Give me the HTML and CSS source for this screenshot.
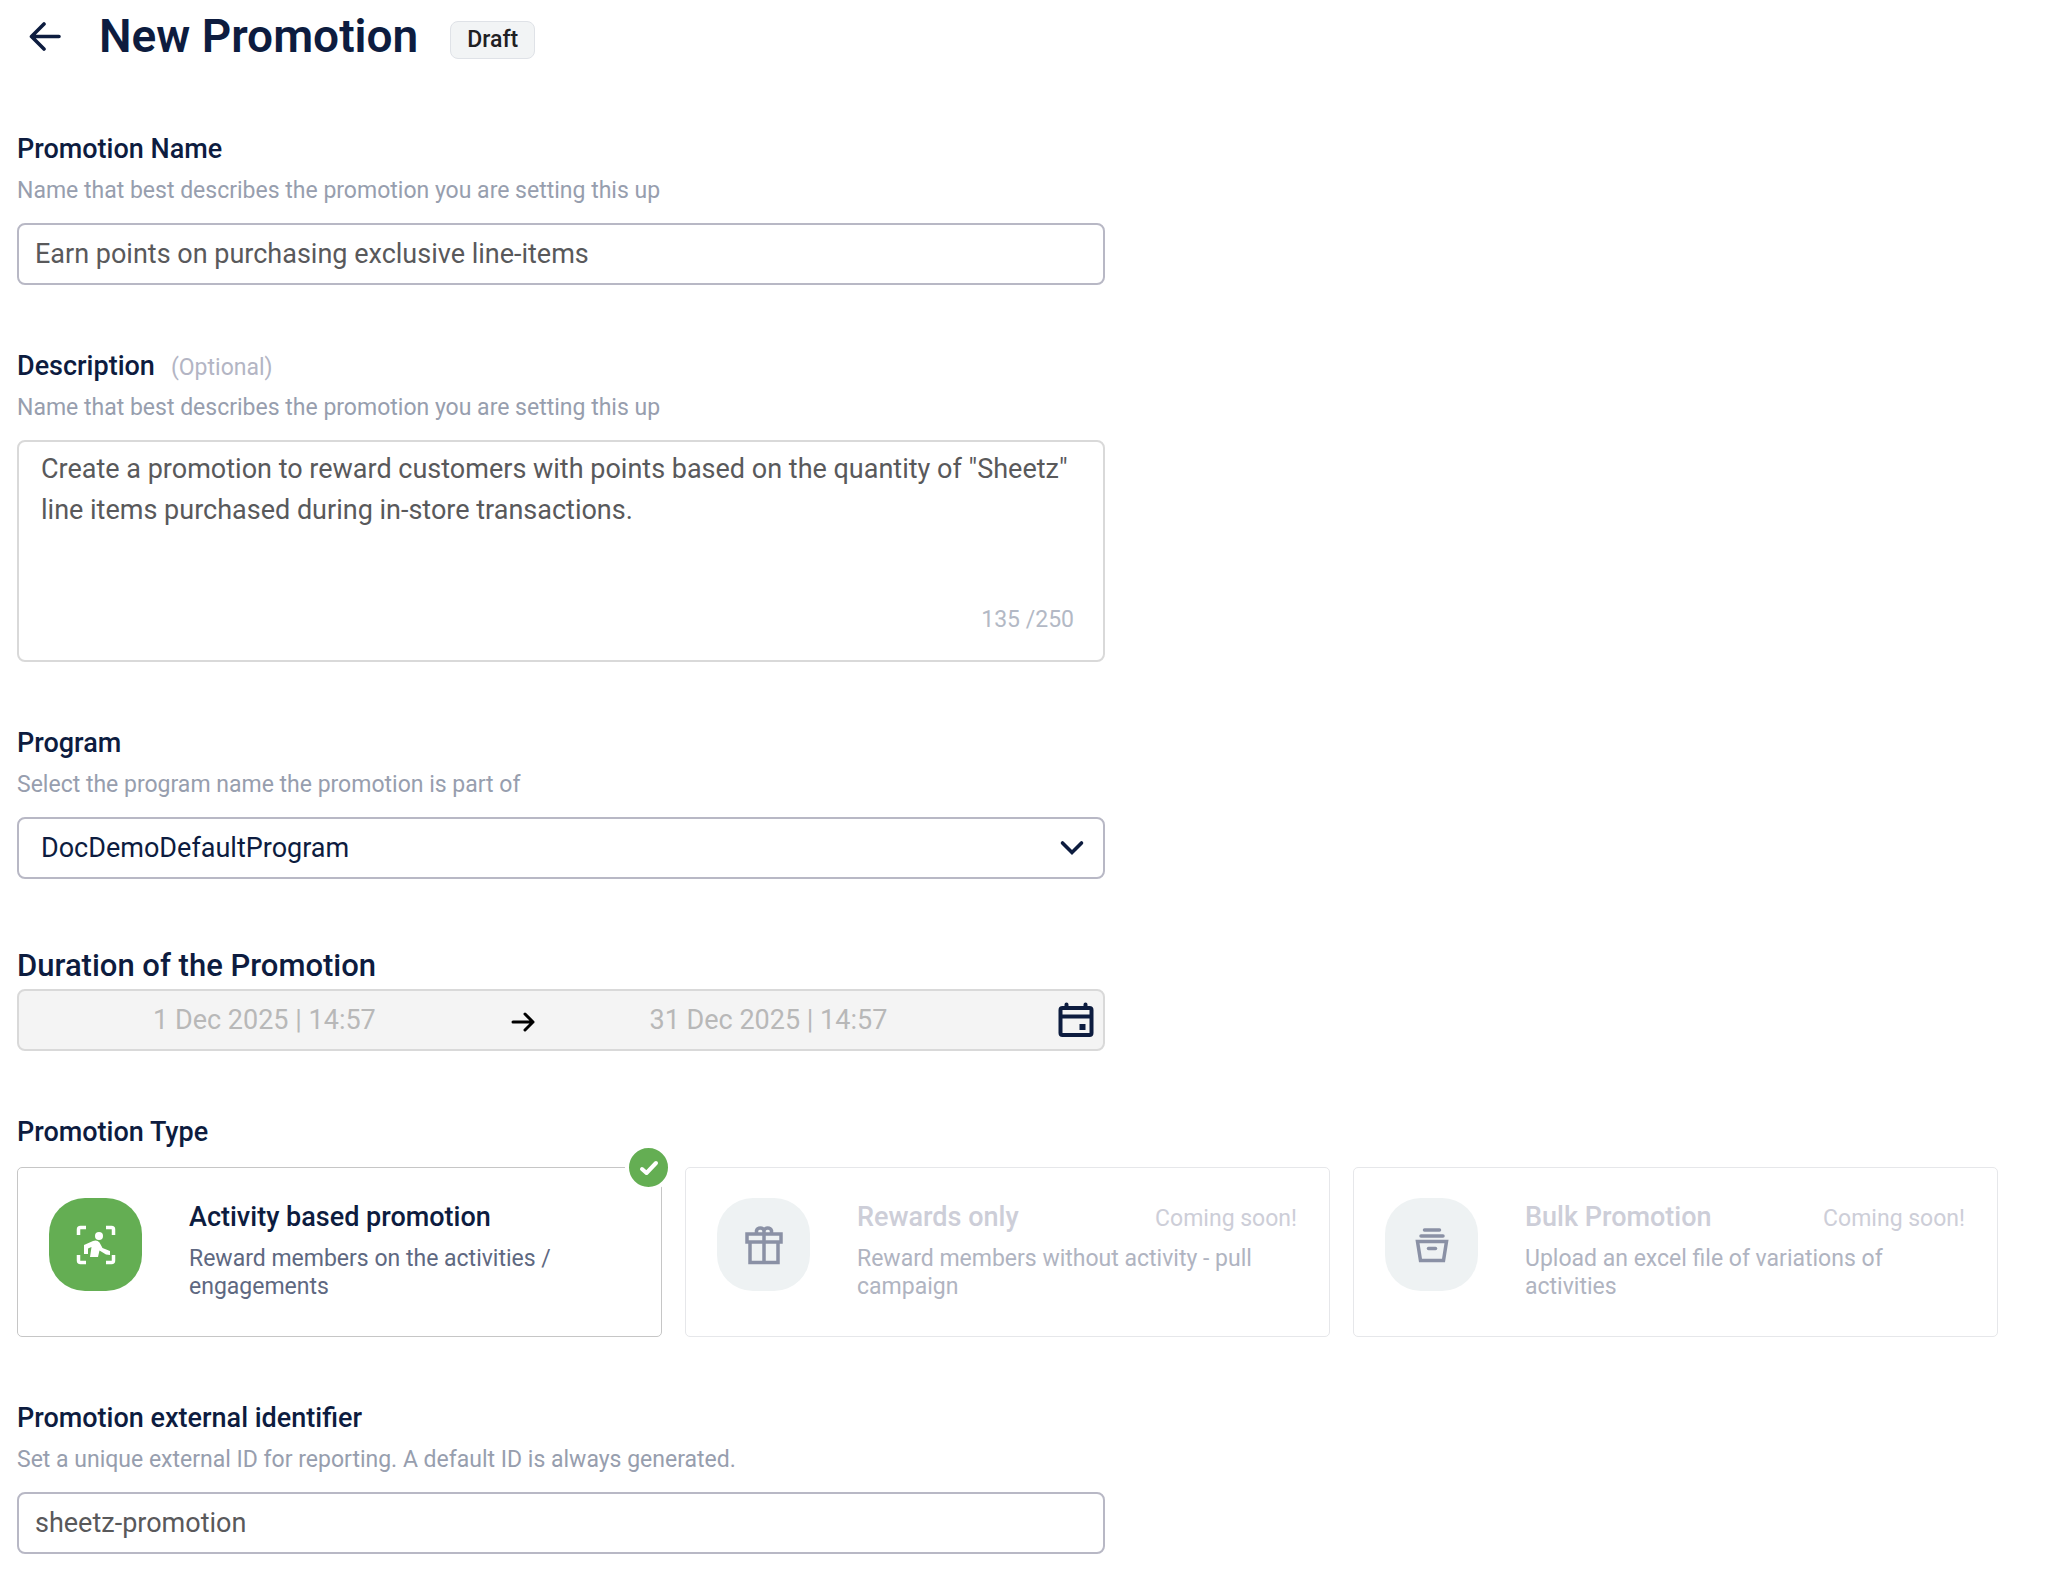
FILE: index.html
```html
<!DOCTYPE html>
<html lang="en">
<head>
<meta charset="utf-8">
<title>New Promotion</title>
<meta name="viewport" content="width=device-width, initial-scale=1">
<link rel="stylesheet" href="styles.css">
</head>
<body>
<main class="page">
  <header class="page-header">
    <button type="button" class="back" aria-label="Back">
      <svg width="32" height="32" viewBox="0 0 32 32" fill="none" stroke="currentColor" stroke-width="3.600" stroke-linecap="round" stroke-linejoin="round"><path d="M30 16.500H3M15 4L2.500 16.500L15 29"/></svg>
    </button>
    <h1 class="title">New Promotion</h1>
    <span class="status">Draft</span>
  </header>

  <form class="form">
    <div class="field">
      <label class="label" for="name">Promotion Name</label>
      <p class="hint">Name that best describes the promotion you are setting this up</p>
      <input class="control" id="name" type="text" value="Earn points on purchasing exclusive line-items">
    </div>

    <div class="field">
      <div class="label-row">
        <label class="label" for="description">Description</label>
        <span class="optional">(Optional)</span>
      </div>
      <p class="hint">Name that best describes the promotion you are setting this up</p>
      <div class="textbox">
        <textarea class="textarea" id="description" maxlength="250">Create a promotion to reward customers with points based on the quantity of "Sheetz" line items purchased during in-store transactions.</textarea>
        <span class="counter">135 /250</span>
      </div>
    </div>

    <div class="field">
      <label class="label" for="program">Program</label>
      <p class="hint">Select the program name the promotion is part of</p>
      <div class="select-wrap">
        <select class="control select" id="program"><option>DocDemoDefaultProgram</option></select>
        <svg class="chevron" width="26" height="26" viewBox="0 0 26 26" fill="none" stroke="currentColor" stroke-width="3.600" stroke-linecap="round" stroke-linejoin="miter"><path d="M3.500 8L13 17.500L22.500 8"/></svg>
      </div>
    </div>

    <div class="field">
      <label class="label label-large" for="start">Duration of the Promotion</label>
      <div class="range">
        <input class="date" id="start" type="text" value="1 Dec 2025 | 14:57" disabled>
        <svg class="range-arrow" width="26" height="26" viewBox="0 0 26 26" fill="none" stroke="currentColor" stroke-width="3" stroke-linecap="round" stroke-linejoin="round"><path d="M3 13H23M15 5L23 13L15 21"/></svg>
        <input class="date" type="text" aria-label="End date" value="31 Dec 2025 | 14:57" disabled>
        <svg class="calendar" width="36" height="36" viewBox="0 0 36 36" fill="none" stroke="currentColor" stroke-width="4"><rect x="2.500" y="6" width="31" height="27" rx="2"/><path d="M2 14.500H34"/><path d="M8.500 6V2.500M27.500 6V2.500" stroke-linecap="round"/><path d="M21.500 22h6v6h-6z" fill="currentColor" stroke="none"/></svg>
      </div>
    </div>

    <fieldset class="types">
      <legend class="label">Promotion Type</legend>
      <div class="cards">
        <label class="card">
          <input class="radio" type="radio" name="type" checked>
          <span class="tile">
            <svg width="40" height="40" viewBox="0 0 40 40" fill="none" stroke="currentColor" stroke-width="3.500" stroke-linejoin="round"><path d="M10 2.500H4.500Q2.500 2.500 2.500 4.500V10M30 2.500H35.500Q37.500 2.500 37.500 4.500V10M2.500 30V35.500Q2.500 37.500 4.500 37.500H10M37.500 30V35.500Q37.500 37.500 35.500 37.500H30"/><circle cx="23" cy="11" r="4" fill="currentColor" stroke="none"/><path d="M8 20L17 16Q21 14.500 23.500 17.500L26.500 23L34 26V30L30 29.500L23.500 25.500L22 32H14L15.500 22L12 23.500V29H8Z" fill="currentColor" stroke="none"/></svg>
          </span>
          <span class="card-body">
            <span class="card-head"><span class="card-title">Activity based promotion</span></span>
            <span class="card-text">Reward members on the activities / engagements</span>
          </span>
          <span class="tick">
            <svg width="22" height="22" viewBox="0 0 22 22" fill="none" stroke="currentColor" stroke-width="4" stroke-linecap="round" stroke-linejoin="round"><path d="M4 12L8.500 16L18 6"/></svg>
          </span>
        </label>
        <label class="card card-off">
          <input class="radio" type="radio" name="type" disabled>
          <span class="tile">
            <svg width="40" height="42" viewBox="0 0 40 42" fill="none" stroke="currentColor" stroke-width="3.500"><rect x="3" y="10" width="34" height="8"/><path d="M6 18V38.500H34V18M20 10V38.500"/><path d="M20 10V6.500A4 4 0 0 0 12.500 6.500V10M20 10V6.500A4 4 0 0 1 27.500 6.500V10"/></svg>
          </span>
          <span class="card-body">
            <span class="card-head"><span class="card-title">Rewards only</span><span class="soon">Coming soon!</span></span>
            <span class="card-text">Reward members without activity - pull campaign</span>
          </span>
        </label>
        <label class="card card-off">
          <input class="radio" type="radio" name="type" disabled>
          <span class="tile">
            <svg width="34" height="36" viewBox="0 0 34 36" fill="none" stroke="currentColor" stroke-width="3.500"><path d="M9.500 3H24.500M6 9H28" stroke-linecap="round"/><path d="M2.500 14.500H31.500L28.500 33.500H5.500Z"/><path d="M13.500 21.500H20.500" stroke-linecap="round"/></svg>
          </span>
          <span class="card-body">
            <span class="card-head"><span class="card-title">Bulk Promotion</span><span class="soon">Coming soon!</span></span>
            <span class="card-text">Upload an excel file of variations of activities</span>
          </span>
        </label>
      </div>
    </fieldset>

    <div class="field">
      <label class="label" for="external-id">Promotion external identifier</label>
      <p class="hint">Set a unique external ID for reporting. A default ID is always generated.</p>
      <input class="control" id="external-id" type="text" value="sheetz-promotion">
    </div>
  </form>
</main>
</body>
</html>
```

FILE: styles.css
```css
*, *::before, *::after { box-sizing: border-box; }

body {
  margin: 0;
  background: #fff;
  color: #0d1c3f;
  font-family: Roboto, "Liberation Sans", sans-serif;
  font-size: 27px;
}

h1, p { margin: 0; }
input, textarea, select, button { font: inherit; }
svg { display: block; flex: none; }

.page { padding: 0 50px 16px 17px; }

.page-header {
  display: flex;
  align-items: center;
  height: 72px;
  padding-left: 12px;
}

.back {
  padding: 0;
  border: 0;
  background: none;
  color: inherit;
  cursor: pointer;
}

.title {
  margin: 0 32px 0 38px;
  font-size: 46px;
  font-weight: 600;
  line-height: 56px;
}

.status {
  margin-top: 7px;
  padding: 0 16px;
  border: 1px solid #dfe2e7;
  border-radius: 8px;
  background: #f2f4f5;
  color: #1f2023;
  font-size: 23px;
  font-weight: 500;
  line-height: 36px;
}

.form {
  display: flex;
  flex-direction: column;
  gap: 63px;
  margin-top: 59px;
}

.field {
  display: flex;
  flex-direction: column;
  width: 100%;
  max-width: 1088px;
}

.label {
  padding: 0;
  font-weight: 500;
  line-height: 36px;
}

.label-large { font-size: 31px; line-height: 47px; }
.label-row { display: flex; align-items: baseline; gap: 16px; }
.optional { color: #b3b5c4; font-size: 23px; }

.hint {
  margin: 10px 0 18px;
  color: #979eae;
  font-size: 23px;
  line-height: 28px;
}

.control {
  width: 100%;
  height: 62px;
  padding: 0 16px;
  border: 2px solid #b8b8c5;
  border-radius: 8px;
  background: #fff;
  color: #59595b;
}

.textbox {
  display: flex;
  flex-direction: column;
  padding: 7px 29px 26px 22px;
  border: 2px solid #d9d9d9;
  border-radius: 8px;
}

.textarea {
  height: 157px;
  padding: 0;
  border: 0;
  outline: 0;
  resize: none;
  background: none;
  color: #59595b;
  line-height: 41px;
}

.counter {
  align-self: flex-end;
  color: #b3b9c5;
  font-size: 23px;
  line-height: 28px;
}

.select-wrap { position: relative; }
.select { appearance: none; padding: 0 22px; color: #0d1c3f; }
.chevron { position: absolute; top: 18px; right: 20px; pointer-events: none; }

.range {
  display: grid;
  grid-template-columns: 19fr 26px 18fr 102px;
  align-items: center;
  height: 62px;
  border: 2px solid #d9d9d9;
  border-radius: 8px;
  background: #f4f4f4;
}

.date {
  width: 100%;
  min-width: 0;
  padding: 0;
  border: 0;
  background: none;
  color: #b8b8b8;
  text-align: center;
}

.range-arrow { color: #000; margin-top: 4px; }
.calendar { justify-self: end; margin-right: 9px; }

.types { min-width: 0; margin: 0; padding: 0; border: 0; }

.cards {
  display: grid;
  grid-template-columns: repeat(3, 1fr);
  gap: 23px;
  margin-top: 17px;
}

.card {
  position: relative;
  display: flex;
  gap: 47px;
  min-height: 170px;
  padding: 30px 32px 30px 31px;
  border: 1px solid #c6c6c6;
  border-radius: 5px;
}

.radio { position: absolute; opacity: 0; margin: 0; }

.tile {
  display: grid;
  flex: none;
  place-items: center;
  width: 93px;
  height: 93px;
  border-radius: 36px;
  background: #64ae53;
  color: #fff;
}

.card-body { flex: 1; min-width: 0; padding-top: 1px; }
.card-head { display: flex; align-items: baseline; justify-content: space-between; }
.card-title { font-weight: 500; line-height: 36px; }
.soon { color: #cdced8; font-size: 23px; }

.card-text {
  display: block;
  margin-top: 10px;
  color: #5e6881;
  font-size: 23px;
  line-height: 28px;
}

.tick {
  position: absolute;
  top: -24px;
  right: -11px;
  display: grid;
  place-items: center;
  width: 47px;
  height: 47px;
  border: 4px solid #fff;
  border-radius: 50%;
  background: #64ae53;
  color: #fff;
}

.card-off { border-color: #e6e7ea; }
.card-off .tile { background: #eef2f3; color: #8a91a5; }
.card-off .card-title { color: #cdced8; }
.card-off .card-text { color: #b0b4c1; }
```
